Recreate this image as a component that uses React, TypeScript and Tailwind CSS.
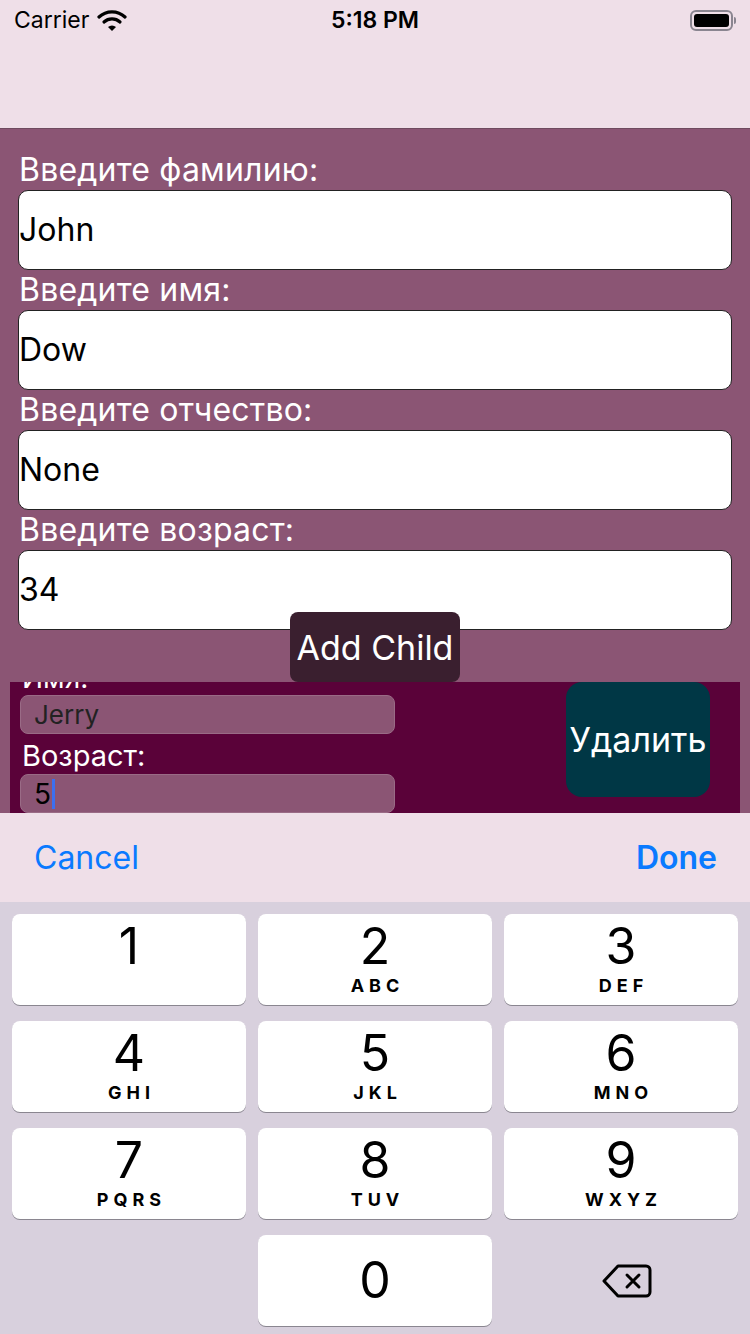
import React from "react";

const font = { fontFamily: "Inter, 'Liberation Sans', sans-serif" };

function Field({ label, value }: { label: string; value: string }) {
  return (
    <div className="flex flex-col">
      <div className="h-[40px] flex items-end pb-[4px] text-[32px] leading-none text-white px-[19px] tracking-[0.2px]">{label}</div>
      <div className="mx-[18px] h-[80px] bg-white border border-[#222] rounded-[10px] flex items-center text-[32px] text-black">
        {value}
      </div>
    </div>
  );
}

function Key({ d, l }: { d: string; l?: string }) {
  return (
    <div className="h-[91px] bg-white rounded-[8px] shadow-[0_1px_0_#8a8690] flex flex-col items-center justify-start">
      <div className="text-[50px] leading-none text-black mt-[7px]">{d}</div>
      {l && <div className="text-[18px] font-bold tracking-[5px] leading-none text-black mt-[6px] pl-[5px]">{l}</div>}
    </div>
  );
}

export default function App() {
  return (
    <div className="w-[750px] h-[1334px] overflow-hidden flex flex-col bg-[#D8D0DD]" style={font}>
      <div className="h-[129px] bg-[#EFDFE8] border-b border-[#6f4a5f] shrink-0 relative">
        <div className="h-[40px] flex items-center justify-between px-[14px] text-[23px] text-black">
          <div className="flex items-center gap-[8px]">
            <span>Carrier</span>
            <svg width="30" height="22" viewBox="0 0 30 22">
              <path d="M2 8 A19 19 0 0 1 28 8" stroke="#000" strokeWidth="3.2" fill="none" strokeLinecap="round" />
              <path d="M7 13 A12 12 0 0 1 23 13" stroke="#000" strokeWidth="3.2" fill="none" strokeLinecap="round" />
              <path d="M11 18 L15 22 L19 18 A6 6 0 0 0 11 18 Z" fill="#000" />
            </svg>
          </div>
          <div className="absolute left-0 right-0 text-center font-semibold pointer-events-none">5:18 PM</div>
          <div className="flex items-center">
            <div className="w-[43px] h-[21px] rounded-[6px] border-[2px] border-[#8a8590] p-[2px]">
              <div className="w-full h-full bg-black rounded-[3px]" />
            </div>
            <div className="w-[2px] h-[7px] bg-[#8a8590] rounded-r ml-[1px]" />
          </div>
        </div>
      </div>

      <div className="h-[684px] bg-[#8B5574] flex flex-col shrink-0">
        <div className="pt-[21px] flex flex-col">
          <Field label="Введите фамилию:" value="John" />
          <Field label="Введите имя:" value="Dow" />
          <Field label="Введите отчество:" value="None" />
          <Field label="Введите возраст:" value="34" />
        </div>
        <div className="flex justify-center mt-[-18px] relative z-10">
          <div className="w-[170px] h-[70px] bg-[#3A1F2F] rounded-[8px] flex items-center justify-center text-white text-[34px]">
            Add Child
          </div>
        </div>
        <div className="mx-[10px] h-[131px] bg-[#5A0239] overflow-hidden flex justify-between">
          <div className="w-[375px] ml-[10px] flex flex-col mt-[-20px]">
            <div className="h-[34px] overflow-hidden relative">
              <div className="absolute left-[2px] top-[2px] text-[28px] leading-none text-white">Имя:</div>
            </div>
            <div className="h-[39px] bg-[#8B5574] rounded-[8px] border border-[#9a6b86] flex items-center pl-[13px] text-[26px] text-[#222]">Jerry</div>
            <div className="h-[41px] flex items-center text-[29px] leading-none text-white pl-[2px] pt-[2px]">Возраст:</div>
            <div className="h-[39px] bg-[#8B5574] rounded-[8px] border border-[#9a6b86] flex items-center pl-[13px] text-[28px] text-black">
              5<span className="inline-block w-[3px] h-[30px] bg-[#3b6ff0] ml-[1px]" />
            </div>
          </div>
          <div className="mr-[30px] w-[144px] h-[115px] bg-[#003745] rounded-[16px] flex items-center justify-center text-white text-[34px]">
            Удалить
          </div>
        </div>
      </div>

      <div className="h-[89px] bg-[#EFDFE8] flex items-center justify-between px-[34px] text-[32px] text-[#0A7AFF] shrink-0">
        <span>Cancel</span>
        <span className="font-semibold mr-[-1px]">Done</span>
      </div>

      <div className="flex-1 bg-[#D8D0DD] px-[12px] pt-[12px]">
        <div className="grid grid-cols-3 gap-x-[12px] gap-y-[16px]">
          <Key d="1" />
          <Key d="2" l="ABC" />
          <Key d="3" l="DEF" />
          <Key d="4" l="GHI" />
          <Key d="5" l="JKL" />
          <Key d="6" l="MNO" />
          <Key d="7" l="PQRS" />
          <Key d="8" l="TUV" />
          <Key d="9" l="WXYZ" />
          <div />
          <div className="h-[91px] bg-white rounded-[8px] shadow-[0_1px_0_#8a8690] flex items-center justify-center text-[50px] text-black">0</div>
          <div className="h-[91px] flex items-center justify-center">
            <svg width="50" height="36" viewBox="0 0 50 36" className="ml-[12px]">
              <path d="M16 3 H44 A4 4 0 0 1 48 7 V29 A4 4 0 0 1 44 33 H16 L2 18 Z" stroke="#000" strokeWidth="3" fill="none" strokeLinejoin="round" />
              <path d="M25 12 L37 24 M37 12 L25 24" stroke="#000" strokeWidth="3" strokeLinecap="round" />
            </svg>
          </div>
        </div>
      </div>
    </div>
  );
}
